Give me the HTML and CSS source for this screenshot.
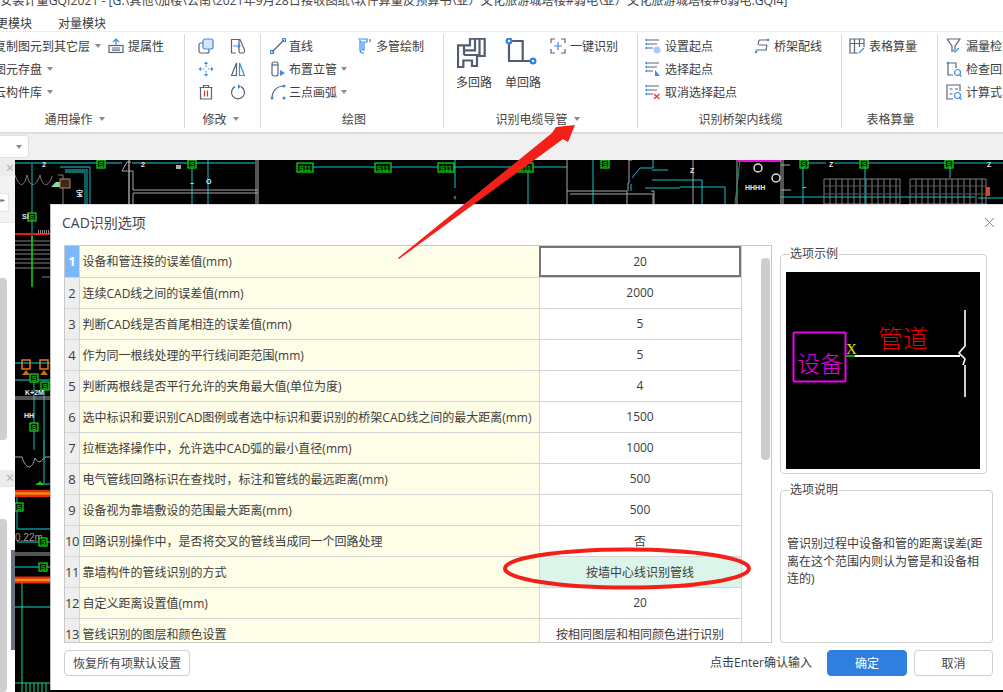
FILE: index.html
```html
<!DOCTYPE html>
<html lang="zh-CN">
<head>
<meta charset="utf-8">
<title>CAD识别选项</title>
<link rel="stylesheet" href="styles.css">
</head>
<body>
<div class="app">
  <div class="title">安装计量GQI2021 - [G:\其他\加楼\公南\2021年9月28日接收图纸\软件算量反预算书\亚）文化旅游城塔楼#弱电\亚）文化旅游城塔楼#6弱电.GQI4]</div>
  <div class="menu"><span>变更模块</span><span>对量模块</span></div>

  <div class="ribbon">
    <section class="group g1">
      <div class="group-body">
        <div class="col c1a">
          <div class="tool"><span>复制图元到其它层</span><i class="caret"></i></div>
          <div class="tool"><span>图元存盘</span><i class="caret"></i></div>
          <div class="tool"><span>云构件库</span><i class="caret"></i></div>
        </div>
        <div class="col">
          <div class="tool"><svg class="ico" viewBox="0 0 16 16"><path d="M8 1v6M5 4l3-3 3 3" class="s-blue"/><rect x="1" y="7.500" width="14" height="7" class="s-dark"/><path d="M4 10h8M4 12.200h8" class="s-dark"/></svg><span>提属性</span></div>
        </div>
      </div>
      <div class="group-label">通用操作<i class="caret"></i></div>
    </section>

    <section class="group g2">
      <div class="group-body">
        <div class="col c2a">
          <div class="tool"><svg class="ico" viewBox="0 0 16 16"><rect x="1" y="5" width="10" height="10" rx="2" class="s-dark"/><rect x="5" y="1" width="10" height="10" rx="2" class="f-blue"/></svg></div>
          <div class="tool"><svg class="ico" viewBox="0 0 16 16"><path d="M8 2v4M8 10v4M2 8h4M10 8h4" class="s-dash"/><path d="M8 0.500L5.800 3h4.400zM8 15.500L5.800 13h4.400zM0.500 8L3 5.800v4.400zM15.500 8L13 5.800v4.400z" class="f-solid"/></svg></div>
          <div class="tool"><svg class="ico" viewBox="0 0 16 16"><path d="M1.500 3.500h13M5.500 3.500V1.500h5v2M2.500 3.500v11.500h11V3.500" class="s-dark"/><path d="M6.500 6.500v6M9.500 6.500v6" class="s-red"/></svg></div>
        </div>
        <div class="col">
          <div class="tool"><svg class="ico" viewBox="0 0 16 16"><path d="M6 15H1.500V1.500H10L14.500 12a2.200 2.200 0 0 1-2 3H10a2 2 0 0 1-1-2V2" class="s-dark"/><path d="M3 8h7M8 6l2 2-2 2" class="s-blue"/></svg></div>
          <div class="tool"><svg class="ico" viewBox="0 0 16 16"><path d="M6.500 2L1.500 14.500H6.500z" class="s-dark"/><path d="M9.500 2L14.500 14.500H9.500z" class="s-blue"/></svg></div>
          <div class="tool"><svg class="ico" viewBox="0 0 16 16"><path d="M11 2.600A6.500 6.500 0 1 1 5 2.600" class="s-dark"/><path d="M8 0l3 2.500L8 5z" class="f-solid"/></svg></div>
        </div>
      </div>
      <div class="group-label">修改<i class="caret"></i></div>
    </section>

    <section class="group g3">
      <div class="group-body">
        <div class="col c3a">
          <div class="tool"><svg class="ico" viewBox="0 0 16 16"><path d="M2 14L14 2" class="s-dark"/><rect x="0.500" y="12.500" width="3" height="3" class="s-blue"/><rect x="12.500" y="0.500" width="3" height="3" class="s-blue"/></svg><span>直线</span></div>
          <div class="tool"><svg class="ico" viewBox="0 0 16 16"><rect x="2" y="1" width="6" height="14" rx="2" class="s-dark"/><path d="M2 4h6" class="s-dark"/><path d="M10 9l5 3-5 3z" class="f-solid"/></svg><span>布置立管</span><i class="caret"></i></div>
          <div class="tool"><svg class="ico" viewBox="0 0 16 16"><path d="M2 14C2 7 7 2 14 2" class="s-dark"/><circle cx="2" cy="14" r="1.500" class="f-dot"/><circle cx="14" cy="2" r="1.500" class="f-dot"/><circle cx="14" cy="14" r="1.500" class="f-dot"/></svg><span>三点画弧</span><i class="caret"></i></div>
        </div>
        <div class="col">
          <div class="tool"><svg class="ico" viewBox="0 0 16 16"><path d="M1 1h9v3H7v8H5V4H3" class="s-blue"/><path d="M3 2v10a3 3 0 0 0 3 3h1" class="s-blue"/><path d="M13 1v3" class="s-dark"/></svg><span>多管绘制</span></div>
        </div>
      </div>
      <div class="group-label">绘图</div>
    </section>

    <section class="group g4">
      <div class="group-body">
        <div class="big b1">
          <svg class="ico-big" viewBox="0 0 30 32"><path d="M7 17V7.300H1V29H6.300V22.500H15V28H20V18H27.700V0.700H13V7.300H7M18 0.700V12.300H7M7 17H22.500V0.700" class="s-slate"/></svg>
          <span>多回路</span>
        </div>
        <div class="big b2">
          <svg class="ico-big2" viewBox="0 0 32 28"><path d="M4 3H17.700V23H4zM17.700 23H28" class="s-slate"/><circle cx="4" cy="3" r="2.400" class="f-ring"/><circle cx="28" cy="23" r="2.400" class="f-ring"/></svg>
          <span>单回路</span>
        </div>
        <div class="col">
          <div class="tool"><svg class="ico" viewBox="0 0 16 16"><path d="M1 5V1h4M11 1h4v4M15 11v4h-4M5 15H1v-4" class="s-dark"/><path d="M8 4v8M4 8h8" class="s-blue"/></svg><span>一键识别</span></div>
        </div>
      </div>
      <div class="group-label">识别电缆导管<i class="caret"></i></div>
    </section>

    <section class="group g5">
      <div class="group-body">
        <div class="col c5a">
          <div class="tool"><svg class="ico" viewBox="0 0 16 16"><path d="M3 2h11M3 6h9M3 10h5" class="s-dark"/><circle cx="1.500" cy="2" r="1.200" class="f-dot"/><circle cx="1.500" cy="6" r="1.200" class="f-dot"/><circle cx="1.500" cy="10" r="1.200" class="f-dot"/><circle cx="12" cy="12" r="3.500" class="f-pale"/></svg><span>设置起点</span></div>
          <div class="tool"><svg class="ico" viewBox="0 0 16 16"><path d="M3 2h11M3 6h9M3 10h5" class="s-dark"/><circle cx="1.500" cy="2" r="1.200" class="f-dot"/><circle cx="1.500" cy="6" r="1.200" class="f-dot"/><circle cx="1.500" cy="10" r="1.200" class="f-dot"/><path d="M10 9l5 6h-5z" class="f-solid"/></svg><span>选择起点</span></div>
          <div class="tool"><svg class="ico" viewBox="0 0 16 16"><path d="M3 2h11M3 6h9M3 10h5" class="s-dark"/><circle cx="1.500" cy="2" r="1.200" class="f-dot"/><circle cx="1.500" cy="6" r="1.200" class="f-dot"/><circle cx="1.500" cy="10" r="1.200" class="f-dot"/><path d="M9 10l5.500 5M14.500 10L9 15" class="s-red"/></svg><span>取消选择起点</span></div>
        </div>
        <div class="col">
          <div class="tool"><svg class="ico" viewBox="0 0 16 16"><path d="M5 2h8M5 7h8M2 12h11M5 2L4 7M13 7l-1 5" class="s-dark"/><circle cx="14" cy="2" r="1.300" class="f-dot"/><circle cx="2" cy="14" r="1.300" class="f-dot"/></svg><span>桥架配线</span></div>
        </div>
      </div>
      <div class="group-label">识别桥架内线缆</div>
    </section>

    <section class="group g6">
      <div class="group-body">
        <div class="col">
          <div class="tool"><svg class="ico" viewBox="0 0 16 16"><path d="M9 15H1V1h14v8M1 5.500h14M5.500 1v14M10.500 1v8" class="s-dark"/><path d="M10 15l5-5" class="s-blue"/></svg><span>表格算量</span></div>
        </div>
      </div>
      <div class="group-label">表格算量</div>
    </section>

    <section class="group g7">
      <div class="group-body">
        <div class="col">
          <div class="tool"><svg class="ico" viewBox="0 0 16 16"><path d="M1 1h13L9 8v4M1 1l5 7v6" class="s-dark"/><path d="M7 12l2 2 4-4" class="s-blue"/></svg><span>漏量检查</span></div>
          <div class="tool"><svg class="ico" viewBox="0 0 16 16"><path d="M2 2h8v5M2 2v12h5" class="s-dark"/><circle cx="2" cy="2" r="1.300" class="f-dot"/><circle cx="11.500" cy="11.500" r="3" class="s-blue"/><path d="M14 14l1.500 1.500" class="s-blue"/></svg><span>检查回路</span></div>
          <div class="tool"><svg class="ico" viewBox="0 0 16 16"><path d="M7 15H1V1h13v6" class="s-dark"/><path d="M3.500 5h3M9 5h3M3.500 10h3" class="s-dark"/><circle cx="11.500" cy="11.500" r="3" class="s-blue"/><path d="M14 14l1.500 1.500" class="s-blue"/></svg><span>计算式</span></div>
        </div>
      </div>
    </section>
  </div>

  <div class="toolbar"><div class="combo"><i class="caret"></i></div></div>

  <div class="work">
    <aside class="side">
      <div class="side-head">×</div>
      <div class="side-tabs"><span class="side-btn">▸▸</span></div>
      <div class="side-panel"><div class="side-thumb"></div></div>
      <div class="side-head">×</div>
      <div class="side-panel grow"><div class="side-thumb"></div></div>
      <div class="splitter"></div>
    </aside>
    <svg class="cad" viewBox="15 160 988 532" preserveAspectRatio="none">
      <defs>
        <g id="sbox"><rect x="0" y="0" width="8" height="8" class="cad-green"/><text x="4" y="7" class="cad-s">S</text></g>
        <g id="s11"><rect x="0" y="0" width="16" height="9" class="cad-green"/><text x="8" y="8" class="cad-s">S11</text></g>
        <g id="bank"><path d="M0 0h76v25H0zM6 0v25M12 0v25M18 0v25M24 0v25M30 0v25M36 0v25M42 0v25M48 0v25M54 0v25M60 0v25M66 0v25M72 0v25" class="cad-bank"/><path d="M0 7h76M0 15h76" class="cad-dim"/></g>
      </defs>
      <path d="M15 163H97M105 163H122M132 163H188M196 163H255M32 163V240M65 170H87V204M65 172H85V204M90 204V167H60" class="cad-teal"/>
      <path d="M208 160V204M192 167V204" class="cad-cyan"/>
      <path d="M129 160V204" class="cad-white"/>
      <path d="M122 171L127 162H131M122 171H133V190H258M133 193H258M258 160V204M256 160V204M133 193V204" class="cad-gray"/>
      <path d="M15 175C20 190 25 185 27 175C30 190 37 185 40 175C43 190 50 185 52 176M58 175H63V204" class="cad-bank"/>
      <use href="#sbox" x="97" y="160"/><use href="#sbox" x="188" y="160"/>
      <path d="M51 187L56 182H65V187H51z" class="cad-mint"/>
      <rect x="60" y="179" width="10" height="9" class="cad-brown"/>
      <text x="42" y="167" class="cad-t">2</text><text x="141" y="167" class="cad-t">2</text>
      <text x="76" y="196" class="cad-t">宝</text><text x="190" y="186" class="cad-t">~</text><text x="206" y="184" class="cad-t">O</text>
      <rect x="176" y="165" width="5" height="4" class="cad-light"/>

      <path d="M313 167H375M391 167H517M533 167H567M455 160V188M528 172V204" class="cad-cyan"/>
      <use href="#s11" x="375" y="163"/><use href="#s11" x="438" y="163"/><use href="#s11" x="517" y="163"/><use href="#s11" x="297" y="163"/>
      <text x="452" y="200" class="cad-t">♀</text>

      <path d="M567 160V204M567 191H627V204M570 194H653V204M628 160H632M629 160V183H628V191M651 191H654V204" class="cad-gray"/>
      <path d="M631 191V184M632 178L640 168H653V160M645 188H680M652 180H702V204M652 170H668M593 160V204" class="cad-cyan"/>
      <use href="#sbox" x="601" y="160"/><use href="#sbox" x="800" y="160"/><use href="#sbox" x="860" y="160"/><use href="#sbox" x="945" y="160"/>
      <path d="M693 160V204M737 160V204" class="cad-gray"/>
      <path d="M738 161H781" class="cad-mag"/>
      <path d="M740 160L735 204" class="cad-gr"/>
      <path d="M781 160V204M783 160V204M781 190H791M781 165H790" class="cad-gray"/>
      <path d="M680 187H725M725 187V204" class="cad-cyan"/>
      <text x="745" y="190" class="cad-t">HHHH</text><text x="690" y="173" class="cad-t">Z</text><text x="829" y="167" class="cad-t">Z</text><text x="987" y="167" class="cad-t">Z</text><text x="802" y="190" class="cad-t">~</text>
      <circle cx="758" cy="168" r="4" class="cad-c"/><circle cx="776" cy="178" r="4" class="cad-c"/>
      <path d="M780 197H975M803 167V204M865 167V204M950 167V178M808 163H826M834 163H860M868 163H945M954 163H1003M978 198H1003" class="cad-cyan"/>
      <use href="#bank" x="824" y="179"/><use href="#bank" x="910" y="179"/>
      <rect x="986" y="187" width="4" height="9" class="cad-orange"/>

      <path d="M15 234H50" class="cad-red"/>
      <path d="M38 232H50" class="cad-bank2"/>
      <path d="M15 241H50M15 245H50M15 250H50M15 254H50M15 259H50M15 263H50M15 268H50M42 277H50" class="cad-bank"/>
      <path d="M32 236V287" class="cad-bright"/>
      <use href="#sbox" x="28" y="213"/>
      <text x="22" y="219" class="cad-t">SI</text>

      <path d="M15 363H50M15 380H50M34 380V450M44 380V462" class="cad-teal"/>
      <rect x="22" y="360" width="8" height="9" class="cad-orangebox"/><rect x="40" y="360" width="8" height="9" class="cad-orangebox"/>
      <path d="M22 375H30L26 370zM40 375H48L44 370z" class="cad-orangefill"/>
      <use href="#sbox" x="30" y="374"/><use href="#sbox" x="41" y="382"/><use href="#sbox" x="30" y="423"/>
      <text x="25" y="395" class="cad-t">K+2M</text><text x="24" y="418" class="cad-t">HH</text>
      <path d="M15 397H50M15 399H50" class="cad-gray"/>
      <path d="M15 457H22C26 470 32 470 35 458C38 464 42 462 44 457H50" class="cad-gray"/>
      <path d="M44 440V484M44 484H50M36 484H44" class="cad-teal"/>
      <path d="M36 485L40 481L44 485z" class="cad-greenfill"/>
      <path d="M15 493.500H50M15 580H50" class="cad-band"/>
      <path d="M15 493.500H50M15 580H50" class="cad-band2"/>
      <path d="M17 497V529H50M17 542H50M15 567H50M15 607H50" class="cad-teal"/>
      <use href="#sbox" x="15" y="503"/>
      <text x="15" y="541" class="cad-zero">0.22m</text>
      <use href="#sbox" x="39" y="538"/><use href="#sbox" x="39" y="563"/>
      <path d="M15 553H50M15 555H50" class="cad-gray"/>
      <path d="M22 583V692M15 683H50M26 683V692M30 683V692M34 683V692M38 683V692M42 683V692M46 683V692" class="cad-bright2"/>
    </svg>
  </div>

  <div class="dialog">
    <header class="dlg-head">
      <h1>CAD识别选项</h1>
      <svg class="dlg-close" viewBox="0 0 12 12"><path d="M1 1l10 10M11 1L1 11"/></svg>
    </header>
    <div class="dlg-body">
      <div class="grid-box">
        <table class="opts">
          <colgroup><col class="col-n"><col class="col-l"><col class="col-v"></colgroup>
          <tbody>
            <tr class="active"><th>1</th><td class="lb">设备和管连接的误差值(mm)</td><td class="val">20</td></tr>
            <tr><th>2</th><td class="lb">连续CAD线之间的误差值(mm)</td><td class="val">2000</td></tr>
            <tr><th>3</th><td class="lb">判断CAD线是否首尾相连的误差值(mm)</td><td class="val">5</td></tr>
            <tr><th>4</th><td class="lb">作为同一根线处理的平行线间距范围(mm)</td><td class="val">5</td></tr>
            <tr><th>5</th><td class="lb">判断两根线是否平行允许的夹角最大值(单位为度)</td><td class="val">4</td></tr>
            <tr><th>6</th><td class="lb">选中标识和要识别CAD图例或者选中标识和要识别的桥架CAD线之间的最大距离(mm)</td><td class="val">1500</td></tr>
            <tr><th>7</th><td class="lb">拉框选择操作中，允许选中CAD弧的最小直径(mm)</td><td class="val">1000</td></tr>
            <tr><th>8</th><td class="lb">电气管线回路标识在查找时，标注和管线的最远距离(mm)</td><td class="val">500</td></tr>
            <tr><th>9</th><td class="lb">设备视为靠墙敷设的范围最大距离(mm)</td><td class="val">500</td></tr>
            <tr><th>10</th><td class="lb">回路识别操作中，是否将交叉的管线当成同一个回路处理</td><td class="val">否</td></tr>
            <tr class="mint"><th>11</th><td class="lb">靠墙构件的管线识别的方式</td><td class="val">按墙中心线识别管线</td></tr>
            <tr><th>12</th><td class="lb">自定义距离设置值(mm)</td><td class="val">20</td></tr>
            <tr><th>13</th><td class="lb">管线识别的图层和颜色设置</td><td class="val">按相同图层和相同颜色进行识别</td></tr>
          </tbody>
        </table>
        <div class="scroll"><div class="thumb"></div></div>
      </div>
      <div class="side-col">
        <fieldset class="fs fs-ex">
          <legend>选项示例</legend>
          <svg class="preview" viewBox="0 0 194 197">
            <rect width="194" height="197" fill="#000"/>
            <rect x="7.500" y="60.500" width="52" height="49" rx="1" class="p-box"/>
            <text x="11" y="100" class="p-dev">设备</text>
            <text x="60" y="82" class="p-x">X</text>
            <text x="92" y="76" class="p-pipe">管道</text>
            <path d="M60 84h9" class="p-g"/>
            <path d="M69 84H174" class="p-w"/>
            <path d="M179 38V74L173 81L179 87L177 93M179 93V125" class="p-w2"/>
          </svg>
        </fieldset>
        <fieldset class="fs fs-desc">
          <legend>选项说明</legend>
          <p>管识别过程中设备和管的距离误差(距离在这个范围内则认为管是和设备相连的)</p>
        </fieldset>
      </div>
    </div>
    <footer class="dlg-foot">
      <button class="btn reset" type="button">恢复所有项默认设置</button>
      <span class="hint">点击Enter确认输入</span>
      <button class="btn primary" type="button">确定</button>
      <button class="btn cancel" type="button">取消</button>
    </footer>
  </div>

  <svg class="marks" viewBox="0 0 1003 692">
    <ellipse cx="627" cy="568.500" rx="122" ry="19" class="m-ell"/>
    <path d="M398 258L552 133L556 127L575 125L568 142L563 139L399 259z" class="m-arrow"/>
  </svg>
</div>
</body>
</html>
```
FILE: styles.css
```css
* { box-sizing: border-box; }
html, body { margin: 0; padding: 0; }
body {
  width: 1003px; height: 692px; overflow: hidden; background: #fff;
  font-family: "Open Sans", "Noto Sans CJK SC", sans-serif;
  font-size: 12px; color: #3c3c3c;
}
.app { position: relative; width: 1003px; height: 692px; overflow: hidden; display: flex; flex-direction: column; }

.title { height: 13px; line-height: 1px; font-size: 12.200px; white-space: nowrap; overflow: hidden; color: #444; flex: none; }
.menu { height: 19px; line-height: 19px; padding-top: 1px; display: flex; gap: 26px; margin-left: -16px; border-bottom: 1px solid #eee; flex: none; }

.ribbon { height: 102px; display: flex; background: #fff; border-bottom: 2px solid #ddd; flex: none; overflow: hidden; }
.group { display: flex; flex-direction: column; height: 94px; margin-top: 2px; border-right: 1px solid #d9d9d9; flex: none; }
.g1 { width: 185px; }
.g2 { width: 76px; }
.g3 { width: 183px; }
.g4 { width: 194px; }
.g5 { width: 204px; }
.g6 { width: 96px; }
.g7 { width: 66px; border-right: 0; }
.group-body { height: 72px; display: flex; }
.group-label { flex: 1; display: flex; align-items: center; justify-content: center; color: #444; padding-top: 4px; }
.col { display: flex; flex-direction: column; }
.tool { height: 23px; display: flex; align-items: center; gap: 4px; white-space: nowrap; flex: none; }
.ico { width: 16px; height: 16px; flex: none; }
.caret { width: 0; height: 0; border-left: 3.500px solid transparent; border-right: 3.500px solid transparent; border-top: 4px solid #8a8a8a; flex: none; margin-left: 6px; }
.tool .caret { margin-left: 1px; }
.g1 .group-body { margin-left: -6px; }
.g1 .group-label { padding-right: 35px; }
.c1a { width: 114px; }
.g2 .group-body { padding-left: 13px; }
.g2 .group-label { padding-right: 4px; }
.c2a { width: 32px; }
.g3 .group-body { padding-left: 9px; }
.g3 .group-label { padding-left: 4px; }
.g3 .tool { gap: 3px; }
.c3a { width: 87px; }
.g4 .group-body { padding-left: 12px; }
.g4 .group-label { padding-right: 6px; }
.big { display: flex; flex-direction: column; align-items: flex-start; }
.big span { line-height: 18px; margin-top: auto; height: 32px; }
.b1 { width: 36px; margin-right: 13px; }
.b2 { width: 36px; margin-right: 9px; }
.ico-big { width: 30px; height: 32px; margin: 4px 0 0 1px; }
.ico-big2 { width: 32px; height: 28px; margin-top: 4px; }
.g5 .group-body { padding-left: 7px; }
.g5 .group-label { padding-left: 2px; }
.c5a { width: 109px; }
.g6 .group-body { padding-left: 7px; }
.g6 .group-label { padding-left: 2px; }
.g7 .group-body { padding-left: 8px; }

.s-dark, .s-blue, .s-red, .s-dash, .s-slate { fill: none; stroke-width: 1.200; }
.s-dark { stroke: #5a6478; }
.s-blue { stroke: #3a8bea; }
.s-dash { stroke: #3a8bea; stroke-dasharray: 1.500 1; }
.s-red { stroke: #e8352b; }
.s-slate { stroke: #535d72; stroke-width: 2.200; }
.f-blue { fill: #d5e7fb; stroke: #3a8bea; stroke-width: 1.200; }
.f-solid { fill: #3a8bea; }
.f-dot { fill: #3a8bea; }
.f-pale { fill: #a5cdf5; }
.f-ring { fill: #fff; stroke: #2d82e8; stroke-width: 2.200; }

.toolbar { height: 26px; background: #f0f0f0; flex: none; }
.combo { width: 29px; height: 23px; background: #fff; border: 1px solid #e2e2e2; border-left: 0; border-radius: 0 4px 4px 0; display: flex; align-items: center; justify-content: flex-end; padding-right: 6px; margin-top: 1px; }

.work { flex: 1; display: flex; position: relative; min-height: 0; }
.side { width: 15px; background: #f3f3f3; display: flex; flex-direction: column; position: relative; flex: none; }
.side-head { height: 16px; line-height: 15px; font-size: 14px; color: #aaa; background: #ececec; text-align: right; padding-right: 1px; flex: none; }
.side-tabs { height: 46px; padding-top: 17px; background: #f3f3f3; flex: none; overflow: hidden; }
.side-btn { display: block; width: 9px; height: 19px; line-height: 12px; font-size: 6px; letter-spacing: -1px; color: #777; background: #fff; border: 1px solid #e5e5e5; border-left: 0; border-radius: 0 3px 3px 0; }
.side-panel { height: 248px; background: #fff; flex: none; padding-top: 55px; padding-bottom: 30px; border-top: 1px solid #e4e4e4; }
.side-panel.grow { flex: 1; height: auto; padding-top: 32px; padding-bottom: 0; }
.side-thumb { width: 7px; height: 100%; background: #cfcfcf; border-radius: 0 4px 4px 0; }
.splitter { position: absolute; left: 11px; top: 390px; width: 4px; height: 100px; background: #6b7380; }
.cad { flex: 1; width: 988px; height: 532px; display: block; background: #000; }

.cad-teal { fill: none; stroke: #0d8f93; stroke-width: 1.300; }
.cad-cyan { fill: none; stroke: #12c4c8; stroke-width: 1; }
.cad-white { stroke: #f0f0f0; stroke-width: 1; fill: none; }
.cad-gray { stroke: #a8a8a8; stroke-width: 1; fill: none; }
.cad-bank { stroke: #808080; stroke-width: 1; fill: none; }
.cad-bank2 { stroke: #888; stroke-width: 4; fill: none; stroke-dasharray: 1 1; }
.cad-dim { stroke: #555; fill: none; }
.cad-green { fill: #001a00; stroke: #12e012; stroke-width: 1.200; }
.cad-s { font-family: "Liberation Sans", sans-serif; font-size: 7px; fill: #12e012; text-anchor: middle; }
.cad-t { font-family: "Liberation Sans", "Noto Sans CJK SC", sans-serif; font-size: 7px; fill: #e8e8e8; font-weight: 700; }
.cad-zero { font-family: "Liberation Sans", sans-serif; font-size: 10px; fill: #999; }
.cad-mint { fill: #87dca8; }
.cad-brown { fill: #3a2a1a; stroke: #b98a5a; }
.cad-light { fill: #aaa; }
.cad-mag { stroke: #e010d0; stroke-width: 2; fill: none; }
.cad-gr { stroke: #0f9a66; fill: none; }
.cad-c { fill: none; stroke: #ddd; stroke-width: 1.500; }
.cad-orange { fill: #d84a20; }
.cad-orangebox { fill: none; stroke: #e87a10; stroke-width: 1.500; }
.cad-orangefill { fill: #d06a10; }
.cad-red { stroke: #e81818; stroke-width: 2; }
.cad-bright { stroke: #12d812; stroke-width: 1.500; fill: none; }
.cad-bright2 { stroke: #12d88a; stroke-width: 1; fill: none; }
.cad-greenfill { fill: #12c812; }
.cad-band { stroke: #e82a10; stroke-width: 7; fill: none; }
.cad-band2 { stroke: #f08a10; stroke-width: 2.500; fill: none; }

.dialog { position: absolute; left: 50px; top: 204px; width: 953px; height: 486px; background: #fff; border-left: 1px solid #bbb; border-top: 1px solid #ddd; display: flex; flex-direction: column; }
.dlg-head { height: 40px; display: flex; align-items: center; justify-content: space-between; padding: 0 8px 6px 11px; flex: none; }
.dlg-head h1 { margin: 0; font-size: 14px; font-weight: 400; color: #444; }
.dlg-close { width: 11px; height: 11px; fill: none; stroke: #777; stroke-width: 1; }
.dlg-body { display: flex; padding-left: 13px; height: 398px; flex: none; }
.grid-box { width: 708px; height: 398px; border: 1px solid #c8c8c8; overflow: hidden; display: flex; flex: none; align-items: flex-start; }
.opts { width: 676px; border-collapse: collapse; table-layout: fixed; flex: none; }
.col-n { width: 14px; }
.col-l { width: 460px; }
.col-v { width: 202px; }
.opts tr { height: 31px; }
.opts th, .opts td { border: 1px solid #d4d4d4; padding: 0; font-weight: 400; white-space: nowrap; overflow: hidden; }
.opts tr:first-child th, .opts tr:first-child td { border-top: 0; }
.opts th { background: #eeeeee; text-align: center; font-size: 13px; letter-spacing: -0.500px; border-left: 0; }
.lb { background: #fefde8; padding-left: 3px !important; }
.val { background: #fff; text-align: center; }
.active th { background: #7ab8fb; color: #fff; font-weight: 700; }
.active .val { outline: 2px solid #757575; outline-offset: -2px; }
.mint .val { background: #dcf5ea; }
.scroll { flex: 1; padding: 12px 2px 0 19px; }
.thumb { width: 9px; height: 202px; background: #cdcdcd; border-radius: 4px; }

.side-col { margin-left: 8px; width: 213px; display: flex; flex-direction: column; flex: none; }
.fs { margin: 0; padding: 0; border: 1px solid #cfcfcf; border-radius: 4px; min-width: 0; }
.fs legend { padding: 0 1px; margin-left: 8px; line-height: 16px; font-size: 12px; color: #444; }
.fs-ex { width: 207px; height: 228px; margin-top: 1px; padding: 10px 0 0 5px; }
.fs-ex legend { margin-left: 3px; }
.fs-desc { width: 213px; height: 161px; margin-top: 8px; }
.fs-desc p { margin: 37px 4px 0 6px; line-height: 17.500px; word-break: break-all; }
.preview { display: block; width: 194px; height: 197px; }
.p-box { fill: none; stroke: #f000f0; stroke-width: 2; }
.p-dev { font-family: "Noto Sans CJK SC", sans-serif; font-weight: 300; font-size: 23px; fill: #e000e0; }
.p-x { font-family: "Liberation Serif", serif; font-size: 15px; fill: #e8e000; }
.p-pipe { font-family: "Noto Sans CJK SC", sans-serif; font-weight: 300; font-size: 25px; fill: #e80000; }
.p-g { stroke: #12e012; stroke-width: 1.500; fill: none; }
.p-w { stroke: #fff; stroke-width: 2; fill: none; }
.p-w2 { stroke: #fff; stroke-width: 1.600; fill: none; }

.dlg-foot { flex: 1; display: flex; align-items: flex-start; padding: 7px 10px 0 13px; }
.btn { font: inherit; height: 26px; border-radius: 4px; border: 1px solid #d0d0d0; background: #fff; color: #444; padding: 0; }
.reset { width: 126px; }
.hint { margin-left: auto; margin-right: 15px; line-height: 26px; }
.primary { width: 80px; background: #2e7fe0; border-color: #2e7fe0; color: #fff; }
.cancel { width: 79px; margin-left: 7px; }

.marks { position: absolute; left: 0; top: 0; width: 1003px; height: 692px; pointer-events: none; }
.m-ell { fill: none; stroke: #f3201a; stroke-width: 4; }
.m-arrow { fill: #f3201a; }
```
